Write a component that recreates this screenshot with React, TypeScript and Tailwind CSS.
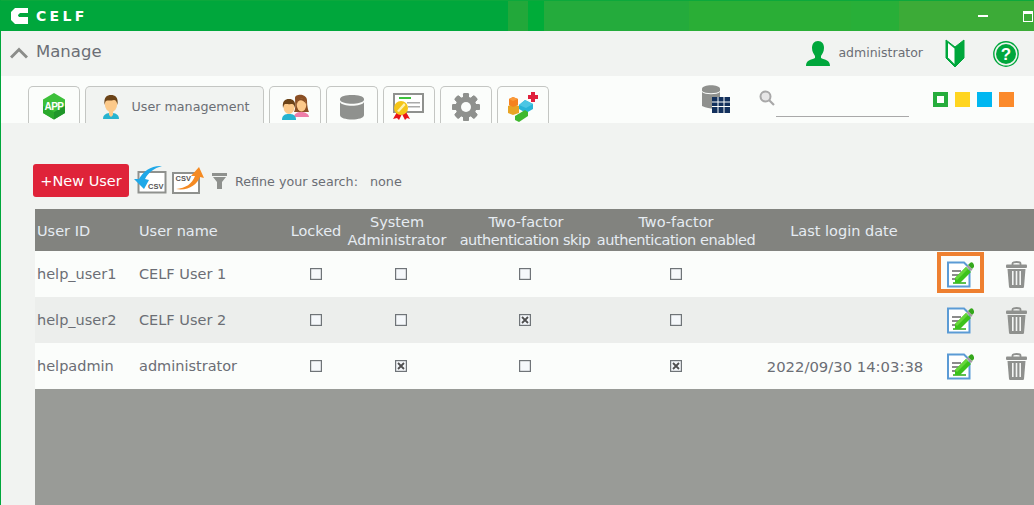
import React from "react";

const FONT = "font-['DejaVu_Sans',sans-serif]";

const AppIcon = () => (
  <svg width="24" height="27" viewBox="0 0 24 27">
    <path d="M12 0 L23 6.5 V20 L12 26.5 L1 20 V6.5 Z" fill="#3cc03a" />
    <path d="M1 13 L12 19 V26.5 L1 20 Z" fill="#2aa92c" />
    <path d="M23 13 L12 19 V26.5 L23 20 Z" fill="#1f962a" />
    <text x="12" y="16.5" textAnchor="middle" fontSize="10" fontWeight="700" letterSpacing="-0.5" fill="#fff" fontFamily="Liberation Sans">APP</text>
  </svg>
);

const Person = ({ hair = "#6b4318", shirt = "#27b3cf" }: { hair?: string; shirt?: string }) => (
  <svg width="18" height="26" viewBox="0 0 18 26">
    <path d="M1 25 C1 20 5 19 9 19 C13 19 17 20 17 25 Z" fill={shirt} />
    <path d="M7 17 H11 V21 L9 23 L7 21 Z" fill="#fcc98a" />
    <ellipse cx="9" cy="10" rx="6.2" ry="8" fill="#fcc98a" />
    <path d="M2.5 11 C1.5 3 5 1 9 1 C13 1 16.5 3 15.5 11 C15 8 14 6 12 6 C9 7 5 6 4 7 C3 8 3 9 2.5 11 Z" fill={hair} />
  </svg>
);

const GroupIcon = () => (
  <svg width="28" height="26" viewBox="0 0 28 26">
    <path d="M14 4 C14 0 25 -1 26 6 C26 12 27 16 28 18 H13 C15 14 14 9 14 4 Z" fill="#8a4f24" />
    <path d="M13 23 C13 20 16 18 20 18 C24 18 28 20 28 23 Z" fill="#ee7da8" />
    <ellipse cx="20.5" cy="11" rx="4.8" ry="6.5" fill="#fcc98a" />
    <path d="M16 10 C17 5 22 5 25 10 C25 3 16 2 16 10 Z" fill="#8a4f24" />
    <path d="M1 26 C1 21 4 20 8 20 C12 20 15 21 15 26 Z" fill="#27b3cf" />
    <ellipse cx="8" cy="13" rx="5.5" ry="7" fill="#fcc98a" />
    <path d="M2 14 C1 7 4 5 8 5 C12 5 15 7 14 14 C13 10 12 10 10 10 C7 11 4 9 3 11 Z" fill="#6b4318" />
  </svg>
);

const DbIcon = () => (
  <svg width="24" height="26" viewBox="0 0 24 26">
    <path d="M0 5 C0 -0.5 24 -0.5 24 5 V21 C24 27 0 27 0 21 Z" fill="#8f918e" />
    <path d="M0 6 C2 11 22 11 24 6 V8 C22 13 2 13 0 8 Z" fill="#fbfdfb" />
  </svg>
);

const CertIcon = () => (
  <svg width="32" height="28" viewBox="0 0 32 28">
    <rect x="1" y="1" width="29" height="18" fill="#fff" stroke="#8f918e" strokeWidth="2" />
    <rect x="6" y="4" width="12" height="2" fill="#3cc23c" />
    <rect x="14" y="9" width="13" height="1.5" fill="#aaa" />
    <rect x="15" y="13" width="12" height="1.5" fill="#aaa" />
    <path d="M4 19 L0 26 L4 25 L6 27 L9 21 L12 27 L14 25 L17 26 L13 19 Z" fill="#e8141c" />
    <circle cx="8" cy="15" r="7" fill="#f5c518" />
    <path d="M4 18 L11 10 L12.5 12 L6 19 Z" fill="#fdf3b0" />
  </svg>
);

const GearIcon = () => (
  <svg width="28" height="28" viewBox="0 0 28 28">
    <g fill="#8f918e">
      {[0, 45, 90, 135, 180, 225, 270, 315].map((deg) => (
        <rect key={deg} x="11" y="0" width="6" height="28" rx="1.5" transform={`rotate(${deg} 14 14)`} />
      ))}
      <circle cx="14" cy="14" r="10.5" />
    </g>
    <circle cx="14" cy="14" r="5" fill="#fbfdfb" />
  </svg>
);

const BlocksIcon = () => (
  <svg width="30" height="30" viewBox="0 0 30 30">
    <path d="M0 14 L5 12 L11 14 V21 L5 23 L0 21 Z" fill="#e8a424" />
    <path d="M1 7 L5 5 L10 7 V13 L5 15 L1 13 Z" fill="#f58220" />
    <path d="M1 7 L5 5 L10 7 L5 9 Z" fill="#fa9a3a" />
    <path d="M11 13 L17 8 L25 12 V17 L18 21 L11 17 Z" fill="#28b4d8" />
    <path d="M11 13 L17 8 L25 12 L18 16 Z" fill="#4cc6e4" />
    <path d="M7 24 L17 18 L20 20 V24 L11 30 L7 28 Z" fill="#3fb82f" />
    <path d="M23 0 H27 V3 H30 V7 H27 V10 H23 V7 H20 V3 H23 Z" fill="#e0203c" />
  </svg>
);

const Tab = ({ children, wide }: { children: React.ReactNode; wide?: boolean }) => (
  <div
    className={`flex h-[37px] items-center justify-center overflow-hidden rounded-t-[5px] border border-b-0 border-[#c4c6c3] pt-[3px] ${
      wide ? "w-[179px] gap-[12px] bg-[#f1f3f1] pl-[2px]" : "w-[52px]"
    }`}
  >
    {children}
  </div>
);

const EditIcon = () => (
  <svg width="27" height="27" viewBox="0 0 27 27">
    <path d="M1 1.5 H17 L22.5 7 V25.5 H1 Z" fill="#fff" stroke="#5b9bd5" strokeWidth="2" />
    <rect x="5" y="9" width="9" height="2" fill="#8b8b8b" />
    <rect x="5" y="13" width="7" height="2" fill="#8b8b8b" />
    <rect x="5" y="17" width="4" height="2" fill="#8b8b8b" />
    <rect x="6" y="21" width="13" height="2" fill="#5fc04f" />
    <path d="M8 17 L19 6 L24 11 L13 22 L8 22 Z" fill="#3cc21c" />
    <path d="M8 17 L19 6 L21 8 L10 19 Z" fill="#66d63a" />
    <path d="M21 4 L23 2 C24 1 25 1 26 2 L27 4 C27.5 5 27 6 26 7 L25 8 Z" fill="#35a81c" />
    <path d="M19.5 5.5 L21 4 L25.5 8.5 L24 10 Z" fill="#a59aa0" />
  </svg>
);

const TrashIcon = () => (
  <svg width="21" height="27" viewBox="0 0 21 27">
    <path d="M6.5 4 V2.5 C6.5 0.5 14.5 0.5 14.5 2.5 V4" fill="none" stroke="#8f918e" strokeWidth="1.8" />
    <rect x="0" y="3.5" width="21" height="3.5" rx="1" fill="#8f918e" />
    <path d="M1.5 8 H19.5 L18 26 C17.9 26.6 17.5 27 16.9 27 H4.1 C3.5 27 3.1 26.6 3 26 Z" fill="#8f918e" />
    <rect x="6" y="10" width="1.6" height="14" fill="#f4f6f4" />
    <rect x="9.7" y="10" width="1.6" height="14" fill="#f4f6f4" />
    <rect x="13.4" y="10" width="1.6" height="14" fill="#f4f6f4" />
  </svg>
);

const CheckBox = ({ checked }: { checked?: boolean }) => (
  <svg width="12" height="12" viewBox="0 0 12 12" className="block">
    <rect x="0.6" y="0.6" width="10.8" height="10.8" fill="#f5f8fb" stroke="#6f7478" strokeWidth="1.2" />
    {checked && <path d="M3 3 L9 9 M9 3 L3 9" stroke="#4f4f4f" strokeWidth="1.8" />}
  </svg>
);

const CsvIcon = ({ up }: { up?: boolean }) =>
  up ? (
    <svg width="33" height="27" viewBox="0 0 33 27">
      <rect x="1" y="6" width="26" height="20" fill="#fff" stroke="#8f918e" strokeWidth="2" />
      <text x="3.5" y="14" fontSize="7.5" fontWeight="700" fill="#555" fontFamily="Liberation Sans">CSV</text>
      <path d="M4 22 C14 21 20 17 23 9 L19 9 L27 0 L32 11 L28 10 C25 18 16 24 4 22 Z" fill="#f58a22" />
    </svg>
  ) : (
    <svg width="33" height="29" viewBox="0 0 33 29">
      <rect x="4.5" y="7" width="27" height="20.5" fill="#fff" stroke="#8f918e" strokeWidth="2" />
      <text x="14" y="24" fontSize="7.5" fontWeight="700" fill="#555" fontFamily="Liberation Sans">CSV</text>
      <path d="M28 1 C20 3 14 8 11 14 L15 15 L10 24 L0 14 L5 14 C9 6 18 0 28 1 Z" fill="#1fa8e8" />
    </svg>
  );

const rows = [
  { id: "help_user1", name: "CELF User 1", checks: [false, false, false, false], date: "", bg: "bg-[#fbfdfb]", active: true },
  { id: "help_user2", name: "CELF User 2", checks: [false, false, true, false], date: "", bg: "bg-[#eceeec]", active: false },
  { id: "helpadmin", name: "administrator", checks: [false, true, false, true], date: "2022/09/30 14:03:38", bg: "bg-[#fbfdfb]", active: false },
];

const COLS = "grid grid-cols-[102px_149px_56px_114px_134px_168px_170px_60px_44px]";

export default function App() {
  return (
    <div className={`${FONT} flex h-[505px] w-[1034px] flex-col overflow-hidden border-l border-[#00a73c] bg-[#f1f3f1] text-[#6b6e75]`}>
      <div className="flex h-[31px] shrink-0 items-center justify-between border-t border-[#0ca83c] bg-[linear-gradient(90deg,#00a73c_0,#00a73c_507px,#22a83a_507px,#22a83a_527px,#00ac39_527px,#00ac39_543px,#24ab3c_543px,#24ab3c_688px,#2aae36_688px,#2aae36_850px,#28af38_850px,#28af38_898px,#3cab37_898px,#3cab37_100%)] pr-[1px] pl-[10px]">
        <div className="flex items-center gap-[8px]">
          <svg width="17" height="16" viewBox="0 0 17 16">
            <path d="M4 0 H17 V5 H9 L7 7 V7.5 L8 9 H17 V16 H4 L0 12 V4 Z" fill="#fff" />
          </svg>
          <span className="text-[14px] leading-none font-bold tracking-[3.3px] text-white">CELF</span>
        </div>
        <div className="flex items-center gap-[35px]">
          <div className="h-[2px] w-[10px] bg-white" />
          <div className="h-[11px] w-[10px] border border-t-[3px] border-white" />
        </div>
      </div>

      <div className="flex h-[45px] shrink-0 items-center pr-[15px] pl-[9px]">
        <svg width="18" height="12" viewBox="0 0 18 12" className="mr-[8px] mb-[2px]">
          <path d="M1 10.5 L9 2.5 L17 10.5" fill="none" stroke="#8b8d8a" strokeWidth="3" />
        </svg>
        <span className="mb-[2px] text-[16.5px] text-[#6b6e75]">Manage</span>
        <div className="ml-auto flex items-center">
          <svg width="26" height="27" viewBox="0 0 26 27">
            <path d="M13 1 C17 1 19 4 19 8 C19 12 17 14 16 16 V18 C20 20 25 20 25 26 H1 C1 20 6 20 10 18 V16 C9 14 7 12 7 8 C7 4 9 1 13 1 Z" fill="#00a73c" />
          </svg>
          <span className="ml-[7px] text-[12.5px]">administrator</span>
          <svg width="20" height="29" viewBox="0 0 20 29" className="ml-[22px]">
            <path d="M1 1 L10 8 L19 1 V19 L10 28 L1 19 Z" fill="#00a73c" stroke="#00a73c" strokeWidth="1" />
            <path d="M3 4 L9.5 9.5 V25 L3 18.5 Z" fill="#fff" />
          </svg>
          <svg width="26" height="26" viewBox="0 0 26 26" className="ml-[28px]">
            <circle cx="13" cy="13" r="12.2" fill="none" stroke="#00a73c" strokeWidth="1.4" />
            <circle cx="13" cy="13" r="10" fill="#00a73c" />
            <text x="13" y="19" textAnchor="middle" fontSize="17" fontWeight="700" fill="#fff" fontFamily="Liberation Sans">?</text>
          </svg>
        </div>
      </div>

      <div className="flex h-[47px] shrink-0 items-end bg-[#fbfdfb] pr-[20px] pl-[27px]">
        <div className="flex gap-[5px]">
          <Tab><AppIcon /></Tab>
          <Tab wide>
            <Person />
            <span className="pt-[1px] text-[12.7px]">User management</span>
          </Tab>
          <Tab><GroupIcon /></Tab>
          <Tab><DbIcon /></Tab>
          <Tab><CertIcon /></Tab>
          <Tab><GearIcon /></Tab>
          <Tab><BlocksIcon /></Tab>
        </div>
        <div className="ml-auto flex h-[47px] items-center">
          <svg width="30" height="30" viewBox="0 0 30 30" className="mb-[2px]">
            <path d="M1 5 C1 0 19 0 19 5 V22 C19 25 10 26 1 22 Z" fill="#8f918e" />
            <path d="M1 7 C4 10 16 10 19 7 V8 C16 11 4 11 1 8 Z" fill="#fbfdfb" />
            <rect x="11" y="13" width="18" height="16" fill="#12305c" />
            <path d="M11 18 H29 M11 22.5 H29 M17 13 V29 M23 13 V29" stroke="#fbfdfb" strokeWidth="1" />
          </svg>
          <svg width="16" height="16" viewBox="0 0 16 16" className="mb-[4px] ml-[28px]">
            <circle cx="6.5" cy="6.5" r="5" fill="#e6e6e6" stroke="#a8a8a8" strokeWidth="2" />
            <path d="M10 10 L15 15" stroke="#a8a8a8" strokeWidth="2.2" />
          </svg>
          <div className="mt-[14px] ml-[1px] h-[20px] w-[133px] border-b border-[#a9a9a9]" />
          <div className="ml-[24px] flex gap-[7px] pb-[1px]">
            <div className="flex h-[15px] w-[15px] items-center justify-center bg-[#26ad3c]">
              <div className="h-[7px] w-[7px] bg-white" />
            </div>
            <div className="h-[15px] w-[15px] bg-[#ffd520]" />
            <div className="h-[15px] w-[15px] bg-[#00b7f1]" />
            <div className="h-[15px] w-[15px] bg-[#fb8a2b]" />
          </div>
        </div>
      </div>

      <div className="flex min-h-0 flex-1 flex-col pt-[41px] pl-[32px]">
        <div className="flex h-[45px] items-start">
          <div className="flex h-[33px] w-[96px] items-center justify-center rounded-[3px] bg-[#df2339] pt-[2px] text-[14.5px] text-white">+New User</div>
          <div className="mt-[1px] ml-[5px]"><CsvIcon /></div>
          <div className="mt-[3px] ml-[5px]"><CsvIcon up /></div>
          <svg width="15" height="16" viewBox="0 0 15 16" className="mt-[9px] ml-[7px]">
            <path d="M0 0 H15 V3 H0 Z M1 4 H14 L10 9 V16 H5 V9 Z" fill="#8f918e" />
          </svg>
          <span className="mt-[10px] ml-[8px] text-[12.7px] leading-[16px]">Refine your search:</span>
          <span className="mt-[10px] ml-[12px] text-[12.8px] leading-[16px]">none</span>
        </div>
        <div className="ml-[2px] flex min-h-0 flex-1 flex-col bg-[#999b97]">
          <div className={`${COLS} h-[42px] items-center bg-[#82837f] pt-[1px] pl-[2px] text-center text-[14.5px] leading-[18px] whitespace-nowrap text-[#e6ecf2]`}>
            <div className="text-left">User ID</div>
            <div className="text-left">User name</div>
            <div>Locked</div>
            <div className="pr-[8px]"><div>System</div><div>Administrator</div></div>
            <div><div className="pl-[2px]">Two-factor</div><div className="tracking-[-0.45px]">authentication skip</div></div>
            <div><div>Two-factor</div><div className="tracking-[-0.45px]">authentication enabled</div></div>
            <div className="pr-[2px]">Last login date</div>
          </div>
          {rows.map((r) => (
            <div key={r.id} className={`${COLS} h-[46px] items-center pl-[2px] text-[14.5px] ${r.bg}`}>
              <div className="pt-[2px]">{r.id}</div>
              <div className="pt-[2px]">{r.name}</div>
              {r.checks.map((c, i) => (
                <div key={i} className="flex justify-center"><CheckBox checked={c} /></div>
              ))}
              <div className="pt-[2px] text-center text-[14.8px] whitespace-nowrap">{r.date}</div>
              <div className="flex justify-center">
                <div className={`mt-[-3px] flex h-[41px] w-[47px] items-center justify-center border-[4px] pt-[3px] ${r.active ? "border-[#ee8030]" : "border-transparent"}`}>
                  <EditIcon />
                </div>
              </div>
              <div className="flex justify-center pl-[8px]"><TrashIcon /></div>
            </div>
          ))}
        </div>
      </div>
    </div>
  );
}
